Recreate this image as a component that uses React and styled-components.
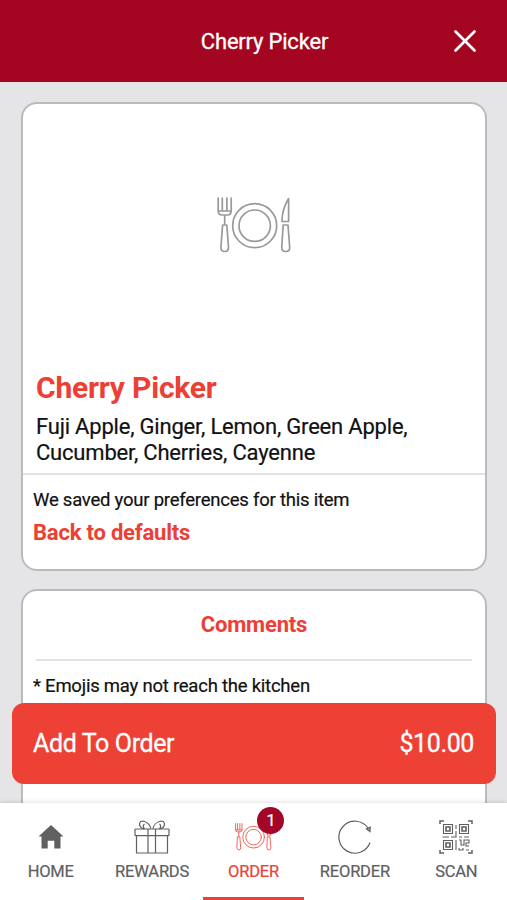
import React, { useState } from "react";
import styled, { createGlobalStyle } from "styled-components";

const GlobalStyle = createGlobalStyle`
  * {
    box-sizing: border-box;
  }
  body {
    margin: 0;
    background-color: #e5e5e7;
    color: #111;
    font-family: Roboto, "Liberation Sans", sans-serif;
    letter-spacing: -0.2px;
  }
  h1, h2, p {
    margin: 0;
  }
  button {
    border: 0;
    padding: 0;
    background: none;
    font-family: inherit;
    letter-spacing: inherit;
    cursor: pointer;
  }
`;

const Screen = styled.div`
  position: relative;
  display: flex;
  flex-direction: column;
  height: 900px;
  overflow: hidden;
`;

const Header = styled.header`
  display: grid;
  grid-template-columns: 64px 1fr 64px;
  align-items: center;
  flex: none;
  height: 82px;
  padding: 0 10px 0 32px;
  background-color: #a40621;
  color: #fff;
`;

const Title = styled.h1`
  grid-column: 2;
  font-size: 22px;
  font-weight: 400;
  text-align: center;
  -webkit-text-stroke: 0.3px;
`;

const CloseButton = styled.button`
  display: flex;
  justify-content: center;
  color: #fff;
`;

const Content = styled.main`
  display: flex;
  flex: 1;
  flex-direction: column;
  gap: 18px;
  min-height: 0;
  padding: 20px 20px 0 21px;
  overflow: hidden;
`;

const Card = styled.section`
  flex: none;
  height: ${props => props.height};
  border: 2px solid #babbbd;
  border-radius: 16px;
  background-color: #fff;
`;

const Picture = styled.div`
  display: flex;
  align-items: center;
  justify-content: center;
  height: 242px;
  color: #999;
`;

const Details = styled.div`
  height: 129px;
  padding: 24px 13px 0;
  border-bottom: 2px solid #e2e2e2;
`;

const ItemName = styled.h2`
  color: #ed4035;
  font-size: 30px;
  line-height: 36px;
  font-weight: 700;
`;

const Ingredients = styled.p`
  margin-top: 8px;
  font-size: 22px;
  line-height: 26px;
  -webkit-text-stroke: 0.2px;
`;

const Preferences = styled.div`
  display: flex;
  flex-direction: column;
  align-items: flex-start;
  padding: 13px 10px;
`;

const Note = styled.p`
  font-size: 18.5px;
  line-height: 24px;
  letter-spacing: -0.23px;
  -webkit-text-stroke: 0.2px;
`;

const Link = styled.button`
  margin-top: 7px;
  color: #ed4035;
  font-size: 22px;
  line-height: 28px;
  font-weight: 700;
`;

const CommentsTitle = styled.h2`
  height: 70px;
  margin: 0 13px 13px;
  padding-top: 20px;
  border-bottom: 2px solid #e2e2e2;
  color: #ed4035;
  font-size: 22px;
  line-height: 28px;
  font-weight: 700;
  text-align: center;
`;

const CommentsNote = styled(Note)`
  padding-left: 10px;
`;

const OrderButton = styled.button`
  position: absolute;
  right: 11px;
  bottom: 116px;
  left: 12px;
  display: flex;
  align-items: center;
  justify-content: space-between;
  height: 81px;
  padding: 0 22px 0 21px;
  border-radius: 12px;
  background-color: #ee4136;
  color: #fff;
  font-size: 25px;
  letter-spacing: -0.37px;
  -webkit-text-stroke: 0.3px;
`;

const TabBar = styled.nav`
  position: relative;
  display: grid;
  grid-template-columns: repeat(5, 1fr);
  flex: none;
  height: 97px;
  background-color: #fff;
  box-shadow: 0 -1px 4px rgba(0, 0, 0, 0.12);
`;

const Tab = styled.button`
  display: flex;
  flex-direction: column;
  align-items: center;
  padding-top: 15px;
  border-bottom: 3px solid ${props => (props.$active ? "#ed4035" : "transparent")};
  color: ${props => (props.$active ? "#ed4035" : "#606062")};
  font-size: 16.5px;
  -webkit-text-stroke: 0.2px;
`;

const IconBox = styled.span`
  position: relative;
  display: flex;
  align-items: center;
  justify-content: center;
  width: 40px;
  height: 38px;
  margin-bottom: 6px;
`;

const Badge = styled.span`
  position: absolute;
  top: -11px;
  right: -11px;
  width: 27px;
  height: 27px;
  border-radius: 50%;
  background-color: #a40627;
  color: #fff;
  font-size: 17px;
  line-height: 27px;
  text-align: center;
`;

const CloseIcon = () => (
  <svg width="24" height="24" viewBox="0 0 24 24" stroke="currentColor" strokeWidth="2.7" strokeLinecap="round">
    <path d="M2.5 2.5 21.5 21.5M21.5 2.5 2.5 21.5" />
  </svg>
);

const PlateIcon = ({ width, stroke }) => (
  <svg
    width={width}
    viewBox="0 0 75 56"
    fill="none"
    stroke="currentColor"
    strokeWidth={stroke}
    strokeLinecap="round"
    strokeLinejoin="round"
  >
    <path d="M1.2 1.2V14q0 4 4 4h5q4 0 4-4V1.2M5.3 1.2V14M9.9 1.2V14M1.2 14h13M7.7 18v9" />
    <path d="M5.6 28h4.2l1.7 22.5q0 4-3.8 4t-3.8-4z" />
    <circle cx="37.7" cy="28.7" r="22" />
    <circle cx="37.7" cy="28.7" r="15.7" />
    <path d="M71.6 1.5Q65 12 65 24.5h6.6zM66.2 28h4.8l1.7 22.5q0 4-4 4t-4-4z" />
  </svg>
);

const HomeIcon = () => (
  <svg width="26" height="24" viewBox="0 0 26 24" fill="currentColor">
    <path d="M13 0 25.5 11.5h-3V23.5h-6.2v-7.8H9.7v7.8H3.5v-12h-3z" />
  </svg>
);

const GiftIcon = () => (
  <svg width="36" height="34" viewBox="0 0 36 34" fill="none" stroke="currentColor" strokeWidth="1.2">
    <rect x="1" y="9" width="34" height="6.7" rx="0.7" />
    <path d="M2.5 15.7V33h31V15.7M14 9v24M21.5 9v24" />
    <path d="M10.3 8.8C7.2 8.3 5.5 6.3 5.5 4S8 .7 10 1.3c3.5 1 6.5 4.2 6.7 7.5M25.3 8.8c3.5-.5 5.2-2.5 5.2-4.8S28 .7 26 1.3c-3.5 1-6.6 4.2-7 7.5M10.5 8.8C9 7 9.3 5 10.5 4M25.5 8.8c1.5-1.8 1.2-3.8 0-4.8" />
  </svg>
);

const ReorderIcon = () => (
  <svg width="34" height="34" viewBox="0 0 34 34" fill="none" stroke="currentColor" strokeWidth="1.2">
    <path d="M32 22.5A16 16 0 1 1 30 8" />
    <path d="M28.5 8.8 32.2 7.2l-.2 4.4z" fill="currentColor" fillOpacity="0.5" />
  </svg>
);

const QrIcon = () => (
  <svg width="34" height="34" viewBox="0 0 34 34" fill="none" stroke="currentColor" strokeWidth="1.1">
    <path d="M1 4V1h4M29 1h4v3M1 30v3h4M29 33h4v-3" strokeWidth="1.5" />
    <path d="M4.5 4.5h9v9h-9zM20.5 4.5h9v9h-9zM4.5 20.5h9v9h-9z" />
    <path d="M7 7h4v4H7zM23 7h4v4h-4zM7 23h4v4H7z" strokeWidth="1.6" />
    <path d="M3.5 17H10m2 0h5v-6m0-2V5M20 17h3m2 0h5M17 20v10M20 20h2v5h3v-5h5v3h-3v3h3M20 28v2h4v-2m3 2h3" />
  </svg>
);

const tabs = [
  { label: "HOME", icon: <HomeIcon /> },
  { label: "REWARDS", icon: <GiftIcon /> },
  { label: "ORDER", icon: <PlateIcon width={37} stroke={1.6} />, badge: 1 },
  { label: "REORDER", icon: <ReorderIcon /> },
  { label: "SCAN", icon: <QrIcon /> }
];

const ItemCard = () => (
  <Card height="469px">
    <Picture>
      <PlateIcon width={75} stroke={1.7} />
    </Picture>
    <Details>
      <ItemName>Cherry Picker</ItemName>
      <Ingredients>
        Fuji Apple, Ginger, Lemon, Green Apple, Cucumber, Cherries, Cayenne
      </Ingredients>
    </Details>
    <Preferences>
      <Note>We saved your preferences for this item</Note>
      <Link>Back to defaults</Link>
    </Preferences>
  </Card>
);

const App = () => {
  const [active, setActive] = useState("ORDER");

  return (
    <>
      <GlobalStyle />
      <Screen>
        <Header>
          <Title>Cherry Picker</Title>
          <CloseButton aria-label="Close">
            <CloseIcon />
          </CloseButton>
        </Header>
        <Content>
          <ItemCard />
          <Card height="300px">
            <CommentsTitle>Comments</CommentsTitle>
            <CommentsNote>* Emojis may not reach the kitchen</CommentsNote>
          </Card>
        </Content>
        <OrderButton>
          <span>Add To Order</span>
          <span>$10.00</span>
        </OrderButton>
        <TabBar>
          {tabs.map(({ label, icon, badge }) => (
            <Tab key={label} $active={label === active} onClick={() => setActive(label)}>
              <IconBox>
                {icon}
                {badge && <Badge>{badge}</Badge>}
              </IconBox>
              {label}
            </Tab>
          ))}
        </TabBar>
      </Screen>
    </>
  );
};

export default App;
